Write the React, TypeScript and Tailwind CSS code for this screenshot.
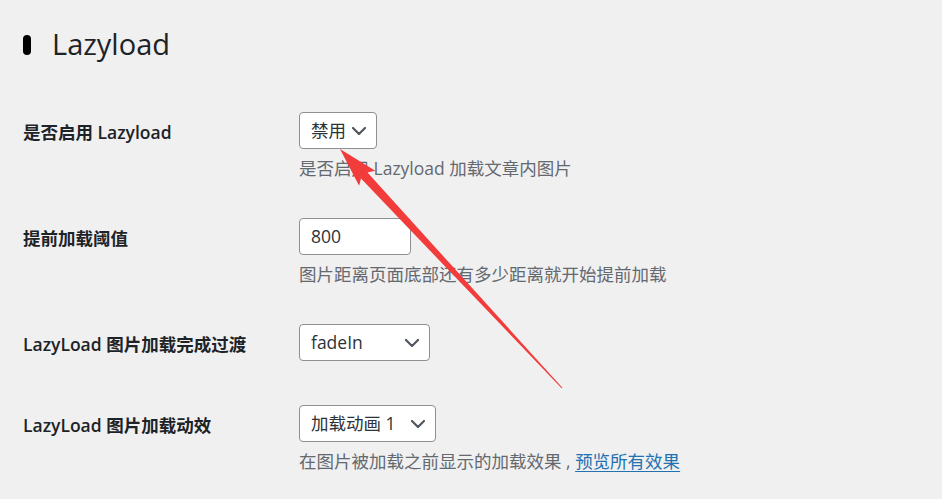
import React from "react";

const font = { fontFamily: '"Open Sans", "Noto Sans CJK SC", sans-serif' };

function Chevron() {
  return (
    <svg width="14" height="8" viewBox="0 0 14 8" fill="none" className="shrink-0">
      <polyline points="1,1 7,7 13,1" stroke="#50575e" strokeWidth="2.2" strokeLinecap="round" strokeLinejoin="round" />
    </svg>
  );
}

function Select({ value, width }: { value: string; width: string }) {
  return (
    <div className={`${width} h-[37px] bg-white border border-[#8c8f94] rounded-[4px] flex items-center justify-between pl-[11px] pr-[10px] text-[17.5px] text-[#2c3338]`}>
      <span>{value}</span>
      <Chevron />
    </div>
  );
}

function Row({ label, pad, children }: { label: string; pad: string; children: React.ReactNode }) {
  return (
    <div className={`flex items-start ${pad}`}>
      <div className="w-[276px] h-[37px] mt-[2px] flex items-center text-[17.5px] font-semibold text-[#1d2327]">{label}</div>
      <div className="flex flex-col">{children}</div>
    </div>
  );
}

function Desc({ children }: { children: React.ReactNode }) {
  return <p className="mt-[6px] text-[17.5px] leading-[26px] text-[#646970] whitespace-nowrap">{children}</p>;
}

export default function App() {
  return (
    <main className="relative w-full h-screen overflow-hidden bg-[#f0f0f1] pl-[23px]" style={font}>
      <h1 className="pt-[28px] flex items-center gap-[21px] text-[29px] leading-[32px] font-medium text-[#1d2327]">
        <span className="w-[8px] h-[20px] rounded-full bg-black mt-[2px]" />
        Lazyload
      </h1>

      <div className="flex flex-col">
        <Row label="是否启用 Lazyload" pad="pt-[52px]">
          <Select value="禁用" width="w-[78px]" />
          <Desc>是否启用 Lazyload 加载文章内图片</Desc>
        </Row>
        <Row label="提前加载阈值" pad="pt-[37px]">
          <div className="w-[112px] h-[37px] bg-white border border-[#8c8f94] rounded-[4px] flex items-center pl-[11px] text-[17.5px] text-[#2c3338]">800</div>
          <Desc>图片距离页面底部还有多少距离就开始提前加载</Desc>
        </Row>
        <Row label="LazyLoad 图片加载完成过渡" pad="pt-[37px]">
          <Select value="fadeIn" width="w-[131px]" />
        </Row>
        <Row label="LazyLoad 图片加载动效" pad="pt-[42px]">
          <Select value="加载动画 1" width="w-[137px]" />
          <Desc>
            在图片被加载之前显示的加载效果 ,{" "}
            <a href="#" className="text-[#2271b1] underline underline-offset-[3px]">预览所有效果</a>
          </Desc>
        </Row>
      </div>

      <svg className="absolute inset-0 pointer-events-none" width="942" height="499" viewBox="0 0 942 499">
        <polygon
          points="340,149 375.3,170.8 367.5,172.5 562.4,387.7 561.6,388.3 361,178.5 359.1,185.8"
          fill="#f23c3c"
        />
      </svg>
    </main>
  );
}
